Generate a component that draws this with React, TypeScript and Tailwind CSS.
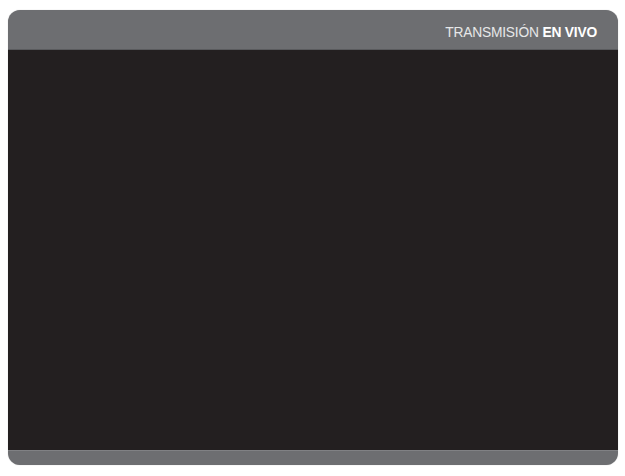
export default function App() {
  return (
    <div className="w-[625px] h-[476px] bg-white pt-[10px] pl-[8px]">
      <div className="w-[610px] h-[455px] rounded-[12px] overflow-hidden flex flex-col bg-[#6d6e71] shadow-[0_0_1px_rgba(0,0,0,0.3)]">
        <div className="h-[40px] flex items-center justify-end pr-[21px] pt-[8px] border-b border-[#5a5b5e]">
          <span
            className="text-[13.8px] text-[#e6e7e8] tracking-[-0.2px]"
            style={{ fontFamily: '"Liberation Sans", Arial, sans-serif' }}
          >
            TRANSMISIÓN <span className="font-bold text-white">EN VIVO</span>
          </span>
        </div>
        <div className="flex-1 bg-[#231f20] border-b border-[#808184]" />
        <div className="h-[14px]" />
      </div>
    </div>
  );
}
